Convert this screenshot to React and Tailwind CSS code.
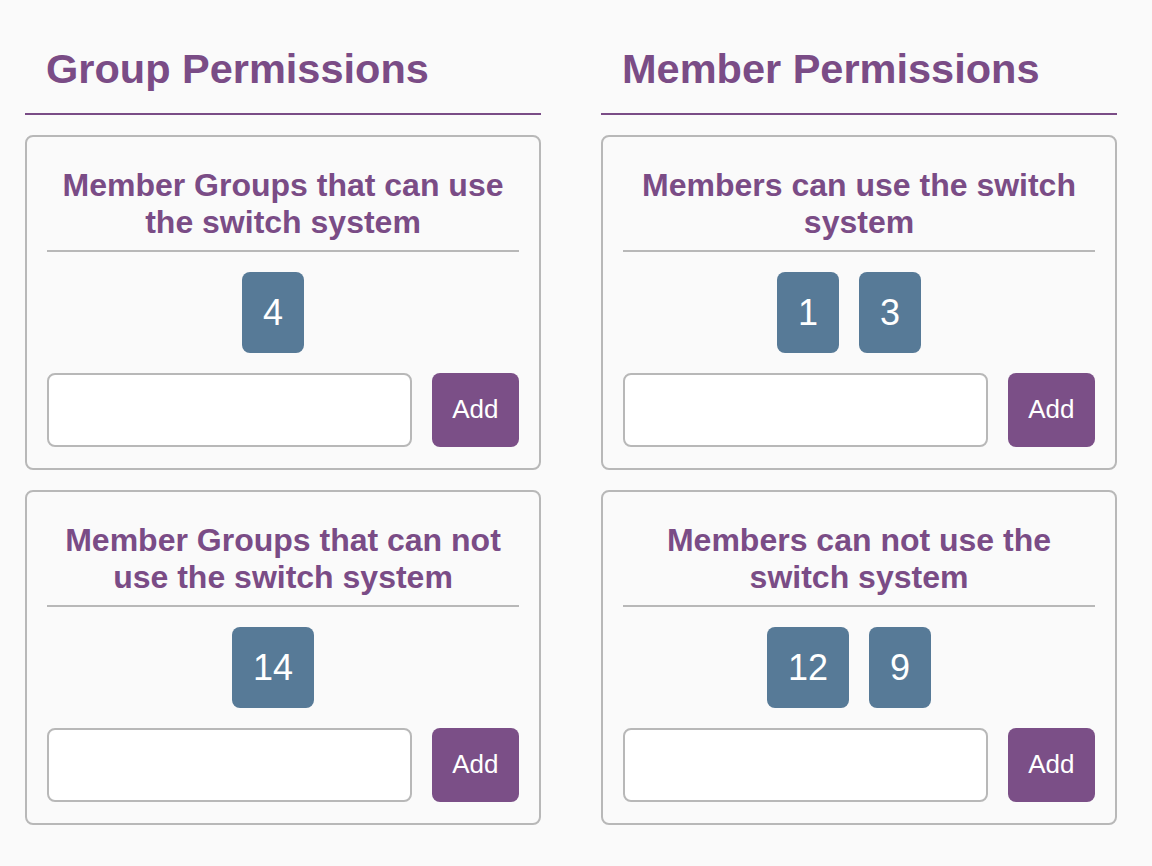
import React from "react";

const font = { fontFamily: '"Liberation Sans", Arial, sans-serif' };

function Chip({ children }) {
  return (
    <div className="mr-5 rounded-lg bg-[#577a97] px-[21px] py-[19.5px] text-[36px] leading-[1.15] text-white">
      {children}
    </div>
  );
}

function Card({ title, chips }) {
  return (
    <div className="rounded-lg border-2 border-[#b8b8b8] px-5 pt-[30px] pb-[21px]">
      <div className="text-center text-[32px] font-bold leading-[1.15] text-[#7a4c86]">
        {title}
      </div>
      <div className="mt-[10px] border-t-2 border-[#b8b8b8]" />
      <div className="mt-5 flex justify-center">
        {chips.map((c) => (
          <Chip key={c}>{c}</Chip>
        ))}
      </div>
      <div className="mt-5 flex gap-5">
        <input
          type="text"
          className="h-[74px] min-w-0 flex-1 rounded-lg border-2 border-[#b8b8b8] bg-white px-3 text-[24px] outline-none"
        />
        <button className="flex h-[74px] items-center rounded-lg bg-[#7b4f87] px-[20.5px] text-[26px] text-white">
          Add
        </button>
      </div>
    </div>
  );
}

function Column({ heading, cards }) {
  return (
    <div className="flex w-[516px] flex-col">
      <div className="border-b-2 border-[#7a4c86] pl-[21px] pr-5 pt-[45px] pb-[20px]">
        <h2 className="text-[41.5px] font-bold leading-[1.15] text-[#7a4c86]">{heading}</h2>
      </div>
      <div className="mt-5 flex flex-col gap-5">
        {cards.map((c) => (
          <Card key={c.title} title={c.title} chips={c.chips} />
        ))}
      </div>
    </div>
  );
}

export default function App() {
  return (
    <div className="min-h-[866px] w-full bg-[#fafafa]" style={font}>
      <div className="flex gap-[60px] pl-[25px]">
        <Column
          heading="Group Permissions"
          cards={[
            { title: "Member Groups that can use the switch system", chips: ["4"] },
            { title: "Member Groups that can not use the switch system", chips: ["14"] },
          ]}
        />
        <Column
          heading="Member Permissions"
          cards={[
            { title: "Members can use the switch system", chips: ["1", "3"] },
            { title: "Members can not use the switch system", chips: ["12", "9"] },
          ]}
        />
      </div>
    </div>
  );
}
